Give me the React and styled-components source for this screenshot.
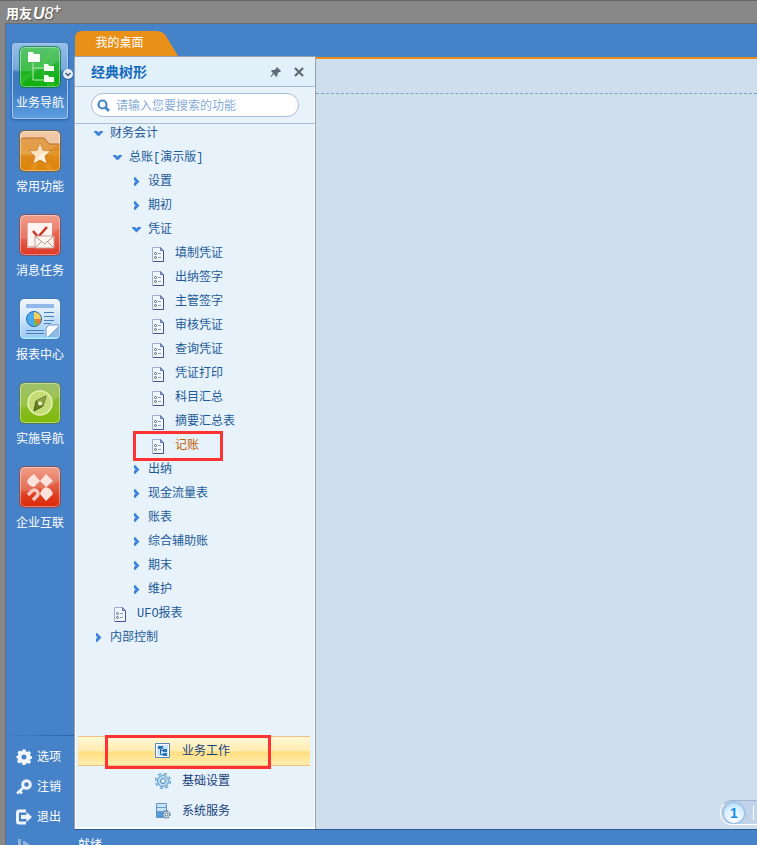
import React from "react";
import { styled, createGlobalStyle, css } from "styled-components";

const GlobalStyle = createGlobalStyle`
  * {
    box-sizing: border-box;
  }
  body {
    margin: 0;
    overflow: hidden;
    font-family: "Liberation Sans", "Noto Sans CJK SC", sans-serif;
    font-size: 12px;
    line-height: 18px;
  }
  button {
    border: 0;
    padding: 0;
    margin: 0;
    background: none;
    font: inherit;
    color: inherit;
    cursor: pointer;
  }
  svg {
    display: block;
    flex: none;
  }
  ul {
    list-style: none;
    margin: 0;
    padding: 0;
  }
`;

const Window = styled.div`
  display: flex;
  flex-direction: column;
  height: 100vh;
  background: #888888;
  border-top: 1px solid #666666;
`;

const TitleBar = styled.header`
  display: flex;
  align-items: center;
  height: 22px;
  padding: 4px 6px 0;
  color: white;
  font-weight: 700;
  text-shadow: 1px 1px 1px #555555;

  span {
    font-size: 13px;
  }
  b {
    margin-left: 1px;
    font-size: 16px;
    font-style: italic;
  }
  i {
    font-weight: 400;
  }
  sup {
    align-self: flex-start;
    font-size: 13px;
    line-height: 8px;
  }
`;

const Frame = styled.div`
  display: flex;
  flex: 1;
  min-height: 0;
  margin-left: 5px;
  border-left: 1px solid #686c74;
  border-top: 1px solid #686c74;
  background: #4682c8;
`;

const Sidebar = styled.nav`
  display: flex;
  flex-direction: column;
  justify-content: space-between;
  width: 68px;
  padding-top: 19px;
  color: white;
`;

const ModuleList = styled.div`
  display: flex;
  flex-direction: column;
  gap: 8px;
  padding-left: 6px;
`;

const ModuleButton = styled.button`
  position: relative;
  display: flex;
  flex-direction: column;
  align-items: center;
  gap: 6px;
  width: 56px;
  height: 76px;
  padding-top: 2px;
  border: 1px solid transparent;
  border-radius: 3px;
  white-space: nowrap;

  ${({ $active }) =>
    $active &&
    css`
      border-color: #a5c7eb;
      background: linear-gradient(
        #94bce8 0%,
        #76a9df 34%,
        #3f79c3 38%,
        #3e7cc6 65%,
        #5c9fdf 100%
      );
      box-shadow: 0 1px 3px #285a9c;
    `}
`;

const MoreBadge = styled.span`
  position: absolute;
  top: 25px;
  right: -6px;
  width: 10px;
  height: 10px;
  border-radius: 50%;
  background: #e5edf6;
  box-shadow: 0 1px 1px #285a9c;
`;

const SystemList = styled.div`
  padding: 6px 0 0 10px;
  height: 110px;
  overflow: hidden;
  border-top: 1px solid;
  border-image: linear-gradient(90deg, #4682c8, #2c62a8) 1;
`;

const SystemButton = styled.button`
  display: flex;
  align-items: center;
  gap: 5px;
  height: 30px;
  white-space: nowrap;
  opacity: ${({ $dim }) => ($dim ? 0.4 : 1)};
`;

const Main = styled.div`
  display: flex;
  flex: 1;
  flex-direction: column;
  min-width: 0;
`;

const TabBar = styled.div`
  display: flex;
  align-items: flex-end;
  height: 32px;
  padding-left: 1px;
`;

const Tab = styled.button`
  width: 103px;
  height: 25px;
  padding: 0 14px 2px 0;
  color: white;
  background: #e89018;
  clip-path: path("M0 25V7Q0 0 7 0H80Q88 0 91 5L103 25Z");
`;

const Content = styled.div`
  display: flex;
  flex: 1;
  min-height: 0;
  border-bottom: 1px solid #2a5a98;
`;

const Panel = styled.aside`
  display: flex;
  flex-direction: column;
  width: 242px;
  flex: none;
  border: 1px solid #98a0a8;
  border-bottom: 0;
  background: #e8f2fb;
  box-shadow: inset 1px 0 white, inset -1px 0 white, inset 0 -2px white;
`;

const PanelHeader = styled.div`
  display: flex;
  align-items: center;
  gap: 12px;
  height: 30px;
  padding: 0 11px 0 16px;
  border-bottom: 1px solid #a5bdd6;
  background: #e2f0f9;

  h1 {
    flex: 1;
    margin: 0;
    color: #1469be;
    font-size: 14px;
    font-weight: 700;
  }
`;

const SearchRow = styled.div`
  padding: 6px 16px;
  border-bottom: 1px solid #a5bdd6;
`;

const SearchBox = styled.label`
  display: flex;
  align-items: center;
  gap: 6px;
  height: 24px;
  padding: 0 5px;
  border: 1px solid #a5bdd6;
  border-radius: 12px;
  background: white;

  input {
    flex: 1;
    min-width: 0;
    padding: 1px 0 0;
    border: 0;
    outline: 0;
    background: none;
    color: #1c5b98;
    font: inherit;
  }
  input::placeholder {
    color: #86acd8;
    opacity: 1;
  }
`;

const Tree = styled.ul`
  display: flex;
  flex: 1;
  flex-direction: column;
  gap: 6px;
  min-height: 0;
  padding-top: 1px;
  overflow: hidden;
  font-family: "Liberation Mono", "Noto Sans CJK SC", monospace;
`;

const TreeRow = styled.li`
  padding-left: ${({ $level, $leaf }) => ($leaf ? 20 : 17) + $level * 19}px;
`;

const TreeButton = styled.button`
  position: relative;
  display: flex;
  align-items: center;
  gap: ${({ $leaf }) => ($leaf ? 10 : 5)}px;
  height: 18px;
  color: ${({ $marked }) => ($marked ? "#c46200" : "#1c5b98")};
  white-space: nowrap;
`;

const Marker = styled.span`
  position: absolute;
  inset: ${({ $inset }) => $inset};
  border: 3px solid #ff3232;
  pointer-events: none;
`;

const GroupList = styled.div`
  padding: 0 5px 3px 3px;
`;

const GroupButton = styled.button`
  position: relative;
  display: flex;
  align-items: center;
  gap: 11px;
  width: 100%;
  height: 30px;
  padding-left: 77px;
  color: #173f7c;
  border-top: 1px solid transparent;
  border-bottom: 1px solid transparent;

  ${({ $active }) =>
    $active &&
    css`
      border-color: #f0c080;
      background: linear-gradient(#fff8d8 0%, #ffedb0 48%, #ffde80 54%, #ffeeb0 100%);
    `}
`;

const Workspace = styled.main`
  display: flex;
  flex: 1;
  flex-direction: column;
  justify-content: space-between;
  min-width: 0;
  margin-top: 1px;
  border-top: 2px solid #e89018;
  background: #cfdeed;
`;

const WorkspaceBar = styled.div`
  height: 35px;
  border-bottom: 1px dashed #6ea6cf;
`;

const Pager = styled.div`
  align-self: flex-end;
  display: flex;
  align-items: center;
  gap: 9px;
  width: 37px;
  height: 25px;
  margin-bottom: 4px;
  padding-left: 3px;
  border: 1px solid white;
  border-top-color: #9db5d2;
  border-right: 0;
  border-radius: 12px 0 0 12px;
  background: #c0d3e8;
  overflow: hidden;

  button {
    flex: none;
    width: 20px;
    height: 20px;
    border-radius: 50%;
    color: #168cec;
    font-size: 14px;
    font-weight: 700;
    background: radial-gradient(circle at 50% 80%, white, #d7effe 60%, #9ccdf3);
    box-shadow: 0 0 2px 1px #8bbbe7;
  }
  span {
    width: 1px;
    height: 14px;
    background: white;
  }
`;

const StatusBar = styled.footer`
  height: 15px;
  padding: 6px 4px 0;
  color: white;
  overflow: hidden;
`;

function Chevron({ open }) {
  return (
    <svg width="13" height="13" viewBox="0 0 13 13" fill="#3c82dc">
      {open ? (
        <path d="M2 3h3l1.500 1.500L8 3h3v1L6.500 8.500 2 4z" />
      ) : (
        <path d="M4 1h1l4.500 4.500L5 10H4V7l1.500-1.500L4 4z" />
      )}
    </svg>
  );
}

function DocIcon() {
  return (
    <svg width="13" height="15" viewBox="0 0 13 15">
      <path d="M.5.5h8l3 3v11H.5z" fill="#f0f6fe" stroke="#9fafd6" />
      <path d="M11.500 4v10.500H1" fill="none" stroke="#4c4f98" />
      <path d="M8.500.5v3h3z" fill="#b8c8ea" stroke="#6570ac" />
      <circle cx="3.500" cy="6.500" r="1" fill="white" stroke="#5a6068" />
      <circle cx="3.500" cy="10.500" r="1" fill="white" stroke="#5a6068" />
      <path d="M6 6.500h3M6 10.500h3" stroke="#7ea2d2" />
    </svg>
  );
}

// glossy 42px tile shared by the module icons
function Tile({ id, from, to, edge, children }) {
  return (
    <svg width="42" height="42" viewBox="0 0 42 42">
      <defs>
        <linearGradient id={id} x2="0" y2="1">
          <stop offset="0" stopColor={from} />
          <stop offset="1" stopColor={to} />
        </linearGradient>
      </defs>
      <rect x="1" y="1" width="40" height="40" rx="4" fill={`url(#${id})`} />
      <path d="M1 25Q24 27 41 14V5Q41 1 37 1H5Q1 1 1 5z" fill="white" opacity=".15" />
      {children}
      <rect x="1.500" y="1.500" width="39" height="39" rx="4" fill="none" stroke="white" opacity=".4" />
      <rect x=".5" y=".5" width="41" height="41" rx="5" fill="none" stroke={edge} opacity=".75" />
    </svg>
  );
}

function NavigationIcon() {
  return (
    <Tile id="navigation" from="#39b957" to="#0fae0c" edge="#0b7835">
      <path d="M21 22 8 2h8zM21 22 31 2h8zM21 22 2 31v8zM21 22l16 18h-9z" fill="#62df45" opacity=".22" />
      <path d="M14 17v17h12M14 22h12" fill="none" stroke="#b8edb1" />
      <path d="M9 6h5l1 2h6v8H9zM25 18h4l1 2h5v5H25zM25 29h4l1 2h5v5H25z" fill="#f7fff4" />
    </Tile>
  );
}

function FavouriteIcon() {
  return (
    <Tile id="favourite" from="#e0903e" to="#dd8507" edge="#865524">
      <path d="M1 9V5q0-4 4-4h32q4 0 4 4v9H30l-5-6H5z" fill="#f0c8a5" />
      <path d="M2 9q1-1 3-1h20l5 6h11" fill="none" stroke="#b56e22" />
      <path d="M21 22 2 18v7zM21 22l19-2v8zM21 22 10 40h7zM21 22l7 18h7z" fill="#ffc65a" opacity=".18" />
      <path d="m21 13 3 7.500 8 .5-6 5 2 8-7-4-7 4 2-8-6-5 8-.5z" fill="#fff2dc" stroke="#b96914" strokeWidth=".7" />
      <path d="m21 13 3 7.500 8 .5-10 3-7 10 1-8-6-5 8-.5z" fill="#f8d4a6" opacity=".5" />
    </Tile>
  );
}

function MessageIcon() {
  return (
    <Tile id="message" from="#ef8d76" to="#df3826" edge="#8b3f46">
      <path d="M8 10h24v24H8z" fill="#d8b3ae" />
      <path d="M9 9h24v23H9z" fill="#fff3ef" />
      <path d="m14 17 5 6 9-10" fill="none" stroke="#cd3529" strokeWidth="2.500" />
      <path d="M16 22h19v12H16z" fill="#fff8f3" stroke="#c89b93" />
      <path d="m16 22 9.500 8 9.500-8M16 34l7-7M35 34l-7-7" fill="none" stroke="#bd8d84" />
    </Tile>
  );
}

function ReportIcon() {
  return (
    <Tile id="report" from="#eff7ff" to="#9ac9f5" edge="#4874aa">
      <path d="M7 6h28v4H7z" fill="#91b8e9" />
      <path d="M25 14.500h10M25 18.500h10M25 22.500h10M25 25.500h7M7 32.500h18M7 35.500h18" stroke="#477fbd" />
      <circle cx="15" cy="21" r="7.500" fill="#4ca9ec" stroke="#2467ad" />
      <path d="M15 21v-7a7 7 0 0 1 7 7z" fill="#f6d157" />
      <path d="M15 21h7a7 7 0 0 1-3 6z" fill="#e67f2f" />
      <path d="m15 21 4 6q-2 1-4 1z" fill="#6bc047" />
      <path d="M27 40V30l3-3h11L29 39z" fill="#f7fbff" stroke="#7398c9" />
      <path d="M41 27 28 40h9q4 0 4-4z" fill="#8fb8e6" />
      <path d="M3 40h36" stroke="#8ae0ff" strokeWidth="2" />
    </Tile>
  );
}

function CompassIcon() {
  return (
    <Tile id="compass" from="#91b751" to="#80bb08" edge="#597837">
      <circle cx="21" cy="21" r="12" fill="#c4dc75" stroke="#e5f1ae" strokeWidth="1.500" />
      <path d="m27 14-10 5-2 10 9-5z" fill="#628021" stroke="#455e19" />
      <path d="m27 14-10 5 7 5z" fill="#8fa448" />
      <circle cx="21" cy="21.500" r="2" fill="#eff5c8" />
    </Tile>
  );
}

function ConnectIcon() {
  return (
    <Tile id="connect" from="#ed8c74" to="#d8280c" edge="#8e403f">
      <path d="M1 31 17 21 41 28v8q0 5-4 5H5q-4 0-4-5z" fill="#e12c0c" opacity=".3" />
      <g fill="#ffe3dc">
        <path d="m15 8 6 7-6 6q-6-1-7-6 2-4 7-7z" />
        <path d="m27 8 7 7-7 6-6-6z" />
        <path d="m27 21q6 2 7 7l-7 7-6-7q1-5 6-7z" />
      </g>
      <path d="m9 29 4-4q3-2 5 0 2 3 0 5l-4 4" fill="none" stroke="#f8c8c0" strokeWidth="3.500" />
    </Tile>
  );
}

function GearIcon() {
  return (
    <svg width="16" height="16" viewBox="0 0 16 16" fill="#f3f7fc">
      <path
        fillRule="evenodd"
        d="M6.500.5h3l.5 2 1.200.500 1.800-1 2 2-1 1.800.500 1.200 2 .500v2l-2 .500-.500 1.200 1 1.800-2 2-1.800-1-1.200.500-.500 1.500h-3L6 14l-1.200-.500-1.800 1-2-2 1-1.800-.500-1.200L.5 9V7l1.500-.5.500-1.200-1-1.800 2-2 1.800 1L6 2zM8 5.500a2.500 2.500 0 1 0 0 5 2.500 2.500 0 0 0 0-5z"
      />
    </svg>
  );
}

function KeyIcon() {
  return (
    <svg width="16" height="16" viewBox="0 0 16 16" fill="none" stroke="#eef4fc">
      <circle cx="10.500" cy="5.500" r="3.800" strokeWidth="3" />
      <path d="m7.500 8.500-6.500 6M3 11.500l3 3" strokeWidth="2.500" />
    </svg>
  );
}

function ExitIcon() {
  return (
    <svg width="16" height="16" viewBox="0 0 16 16">
      <path d="M10 2H3Q1.500 2 1.500 4v8q0 2 1.500 2h7" fill="none" stroke="#eef4fc" strokeWidth="3" />
      <path d="M5 6h5.500V3L16 8l-5.500 5v-3H5z" fill="#eef4fc" />
    </svg>
  );
}

function SwitchIcon() {
  return (
    <svg width="16" height="16" viewBox="0 0 16 16" fill="white">
      <path d="M2 0h3v9H2zM7 2h2v10H7zM9 2l5 4-5 4z" />
    </svg>
  );
}

function SearchIcon() {
  return (
    <svg width="13" height="13" viewBox="0 0 13 13" fill="none" stroke="#4684cb">
      <circle cx="5.500" cy="5.500" r="4" strokeWidth="2.200" />
      <path d="m8.500 8.500 3.500 3.500" strokeWidth="2.800" />
    </svg>
  );
}

function PinIcon() {
  return (
    <svg width="12" height="12" viewBox="0 0 12 12" fill="#5f6b7a">
      <path d="m7 1 4 4-1 1H9L7.500 7.500v2L6 11 4 8 1 11l-.5-.5L3 7 1 5l1-1h2.500L6.500 2z" />
    </svg>
  );
}

function CloseIcon() {
  return (
    <svg width="10" height="10" viewBox="0 0 10 10" stroke="#5f6b7a" strokeWidth="2.300">
      <path d="m1 1 8 8M9 1 1 9" />
    </svg>
  );
}

function WorkIcon() {
  return (
    <svg width="16" height="16" viewBox="0 0 16 16">
      <path d="M.5.5h14v14H.5z" fill="#c9e4fa" stroke="#5686bb" />
      <path d="M1.500 1.500h12v12h-12z" fill="none" stroke="white" />
      <path d="M5.500 5v6.500H9M5.500 7.500H9" fill="none" stroke="#2167aa" />
      <path d="M3 3h5v3H3zM8 6h4v3H8zM8 10h4v3H8z" fill="#2874b9" />
    </svg>
  );
}

function SettingsIcon() {
  return (
    <svg width="16" height="16" viewBox="0 0 16 16">
      <circle cx="8" cy="8" r="6.500" fill="none" stroke="#4b85b8" strokeWidth="3" strokeDasharray="2.600 2.500" />
      <circle cx="8" cy="8" r="5.500" fill="#b7dcf6" stroke="#5d95c5" />
      <circle cx="8" cy="8" r="6.500" fill="none" stroke="#a9d2f0" strokeWidth="1.500" strokeDasharray="2.600 2.500" />
      <circle cx="8" cy="8" r="2.500" fill="#e8f2fb" stroke="#4b82ae" />
    </svg>
  );
}

function ServiceIcon() {
  return (
    <svg width="16" height="16" viewBox="0 0 16 16">
      <path d="M1.500.5h10v14h-10z" fill="#c5e3f8" stroke="#6793bd" />
      <path d="M2 9h9v5H2z" fill="#4f9edc" />
      <path d="M2 4.500h9M2 8.500h9" stroke="#6c9dcb" />
      <circle cx="11.500" cy="11.500" r="3.500" fill="#dce8f1" stroke="#58758e" strokeWidth="1.500" strokeDasharray="1.600 1.140" />
      <circle cx="11.500" cy="11.500" r="1.500" fill="white" stroke="#58758e" />
    </svg>
  );
}

const modules = [
  { label: "业务导航", Icon: NavigationIcon, active: true },
  { label: "常用功能", Icon: FavouriteIcon },
  { label: "消息任务", Icon: MessageIcon },
  { label: "报表中心", Icon: ReportIcon },
  { label: "实施导航", Icon: CompassIcon },
  { label: "企业互联", Icon: ConnectIcon },
];

const systemItems = [
  { label: "选项", Icon: GearIcon },
  { label: "注销", Icon: KeyIcon },
  { label: "退出", Icon: ExitIcon },
];

const treeItems = [
  { label: "财务会计", level: 0, open: true },
  { label: "总账[演示版]", level: 1, open: true },
  { label: "设置", level: 2 },
  { label: "期初", level: 2 },
  { label: "凭证", level: 2, open: true },
  { label: "填制凭证", level: 3, leaf: true },
  { label: "出纳签字", level: 3, leaf: true },
  { label: "主管签字", level: 3, leaf: true },
  { label: "审核凭证", level: 3, leaf: true },
  { label: "查询凭证", level: 3, leaf: true },
  { label: "凭证打印", level: 3, leaf: true },
  { label: "科目汇总", level: 3, leaf: true },
  { label: "摘要汇总表", level: 3, leaf: true },
  { label: "记账", level: 3, leaf: true, marked: true },
  { label: "出纳", level: 2 },
  { label: "现金流量表", level: 2 },
  { label: "账表", level: 2 },
  { label: "综合辅助账", level: 2 },
  { label: "期末", level: 2 },
  { label: "维护", level: 2 },
  { label: "UFO报表", level: 1, leaf: true },
  { label: "内部控制", level: 0 },
];

const groups = [
  { label: "业务工作", Icon: WorkIcon, active: true },
  { label: "基础设置", Icon: SettingsIcon },
  { label: "系统服务", Icon: ServiceIcon },
];

export default function App() {
  return (
    <>
      <GlobalStyle />
      <Window>
        <TitleBar>
          <span>用友</span>
          <b>
            U<i>8</i>
          </b>
          <sup>+</sup>
        </TitleBar>
        <Frame>
          <Sidebar>
            <ModuleList>
              {modules.map(({ label, Icon, active }) => (
                <ModuleButton key={label} $active={active}>
                  <Icon />
                  {label}
                  {active && (
                    <MoreBadge>
                      <svg width="10" height="10" viewBox="0 0 10 10">
                        <path d="m2.500 4 2.500 2.500L7.500 4" fill="none" stroke="#405b80" strokeWidth="1.500" />
                      </svg>
                    </MoreBadge>
                  )}
                </ModuleButton>
              ))}
            </ModuleList>
            <SystemList>
              {systemItems.map(({ label, Icon }) => (
                <SystemButton key={label}>
                  <Icon />
                  {label}
                </SystemButton>
              ))}
              <SystemButton $dim aria-label="切换">
                <SwitchIcon />
              </SystemButton>
            </SystemList>
          </Sidebar>
          <Main>
            <TabBar>
              <Tab>我的桌面</Tab>
            </TabBar>
            <Content>
              <Panel>
                <PanelHeader>
                  <h1>经典树形</h1>
                  <button aria-label="固定">
                    <PinIcon />
                  </button>
                  <button aria-label="关闭">
                    <CloseIcon />
                  </button>
                </PanelHeader>
                <SearchRow>
                  <SearchBox>
                    <SearchIcon />
                    <input
                      type="text"
                      aria-label="搜索"
                      placeholder="请输入您要搜索的功能"
                    />
                  </SearchBox>
                </SearchRow>
                <Tree>
                  {treeItems.map(({ label, level, open, leaf, marked }) => (
                    <TreeRow key={label} $level={level} $leaf={leaf}>
                      <TreeButton $leaf={leaf} $marked={marked}>
                        {leaf ? <DocIcon /> : <Chevron open={open} />}
                        {label}
                        {marked && <Marker $inset="-6px -24px -6px -19px" />}
                      </TreeButton>
                    </TreeRow>
                  ))}
                </Tree>
                <GroupList>
                  {groups.map(({ label, Icon, active }) => (
                    <GroupButton key={label} $active={active}>
                      <Icon />
                      {label}
                      {active && <Marker $inset="-2px 39px -4px 27px" />}
                    </GroupButton>
                  ))}
                </GroupList>
              </Panel>
              <Workspace>
                <WorkspaceBar />
                <Pager>
                  <button>1</button>
                  <span />
                </Pager>
              </Workspace>
            </Content>
            <StatusBar>就绪</StatusBar>
          </Main>
        </Frame>
      </Window>
    </>
  );
}
